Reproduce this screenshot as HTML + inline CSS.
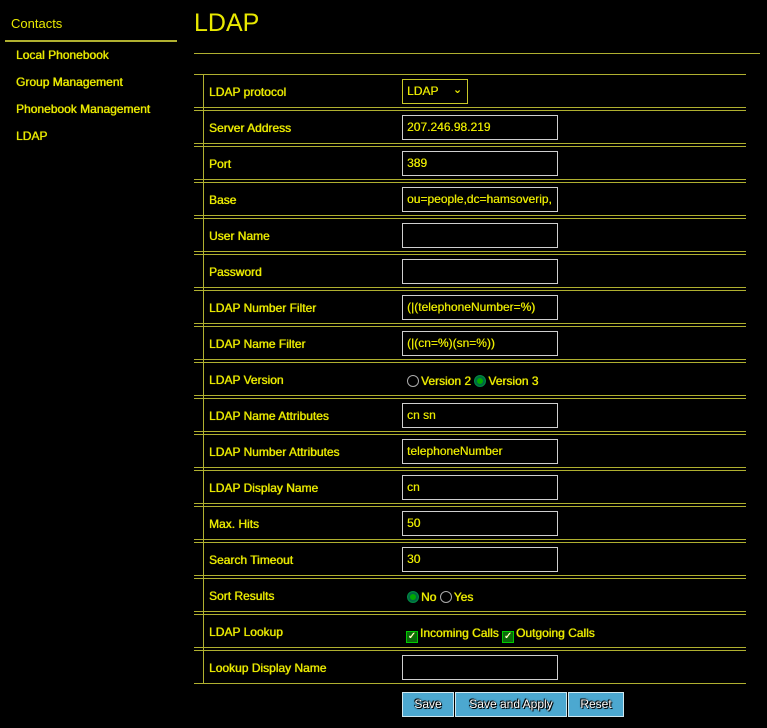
<!DOCTYPE html>
<html><head><meta charset="utf-8"><style>
*{margin:0;padding:0;box-sizing:border-box}
body{width:767px;height:728px;background:#000;position:relative;overflow:hidden;font-family:"Liberation Sans",Arial,sans-serif;color:#e8e800}
.a{position:absolute}
.l{position:absolute;background:#b0b030;height:1px}
.t{position:absolute;font-size:12px;line-height:14px;text-shadow:0 0 0.6px #e8e800,0.3px 0 0 #e8e800;white-space:nowrap}
.in{position:absolute;left:402px;width:156px;height:25px;border:1px solid #cfcfcf;background:#000;font-size:12px;line-height:23px;padding-left:4px;white-space:nowrap;overflow:hidden;color:#e8e800;text-shadow:0.3px 0 0 #e8e800}
.btn{position:absolute;top:692px;height:25px;background:#4ca8d0;border:1px solid #cfe8f0;color:#fff;font-size:12px;text-align:center;line-height:23px;text-shadow:0 0 1px #000,0 0 2px #000,1px 1px 0 #000,-1px -1px 0 #000}
.rad{display:inline-block;width:12px;height:12px;border-radius:50%;border:1px solid #aaa;vertical-align:-2px;margin-right:2px}
.rad.on{background:#0a0;border-color:#084;box-shadow:inset 0 0 0 2px #064}
.cb{display:inline-block;width:12px;height:12px;background:#0a6a0a;border:1px solid #0c0;vertical-align:-2px;margin-right:2px;color:#fff;font-size:10px;line-height:10px;text-align:center}
</style></head><body>
<div class="a" style="left:11px;top:16px;font-size:13px;">Contacts</div>
<div class="l" style="left:5px;top:40px;width:172px;height:2px"></div>
<div class="t" style="left:16px;top:48px">Local Phonebook</div>
<div class="t" style="left:16px;top:75px">Group Management</div>
<div class="t" style="left:16px;top:102px">Phonebook Management</div>
<div class="t" style="left:16px;top:129px">LDAP</div>
<div class="a" style="left:194px;top:8px;font-size:25px;line-height:30px">LDAP</div>
<div class="l" style="left:194px;top:53px;width:566px"></div>
<div class="a" style="left:203px;top:74px;width:1px;height:610px;background:#b0b030"></div>
<div id="rows"></div>
<script>
var rows=[["LDAP protocol","sel"],["Server Address","207.246.98.219"],["Port","389"],["Base","ou=people,dc=hamsoverip,"],["User Name",""],["Password",""],["LDAP Number Filter","(|(telephoneNumber=%)"],["LDAP Name Filter","(|(cn=%)(sn=%))"],["LDAP Version","ver"],["LDAP Name Attributes","cn sn"],["LDAP Number Attributes","telephoneNumber"],["LDAP Display Name","cn"],["Max. Hits","50"],["Search Timeout","30"],["Sort Results","sort"],["LDAP Lookup","look"],["Lookup Display Name",""]];
var h="";
rows.forEach(function(r,i){
var y=74+36*i;
h+='<div class="l" style="left:194px;top:'+y+'px;width:552px"></div>';
h+='<div class="l" style="left:194px;top:'+(y+33)+'px;width:552px"></div>';
h+='<div class="t" style="left:209px;top:'+(y+11)+'px">'+r[0]+'</div>';
var v=r[1];
if(v=="sel")h+='<div class="in" style="top:'+(y+5)+'px;width:66px;border-color:#c8c828">LDAP <span style="position:absolute;right:5px;top:-1px;font-size:11px">&#8964;</span></div>';
else if(v=="ver")h+='<div class="t" style="left:407px;top:'+(y+12)+'px"><span class="rad"></span>Version 2 <span class="rad on"></span>Version 3</div>';
else if(v=="sort")h+='<div class="t" style="left:407px;top:'+(y+12)+'px"><span class="rad on"></span>No <span class="rad"></span>Yes</div>';
else if(v=="look")h+='<div class="t" style="left:406px;top:'+(y+12)+'px"><span class="cb">&#10003;</span>Incoming Calls <span class="cb">&#10003;</span>Outgoing Calls</div>';
else h+='<div class="in" style="top:'+(y+5)+'px">'+v+'</div>';
});
document.getElementById("rows").innerHTML=h;
</script>
<div class="btn" style="left:402px;width:52px">Save</div>
<div class="btn" style="left:455px;width:112px">Save and Apply</div>
<div class="btn" style="left:568px;width:56px">Reset</div>
</body></html>
